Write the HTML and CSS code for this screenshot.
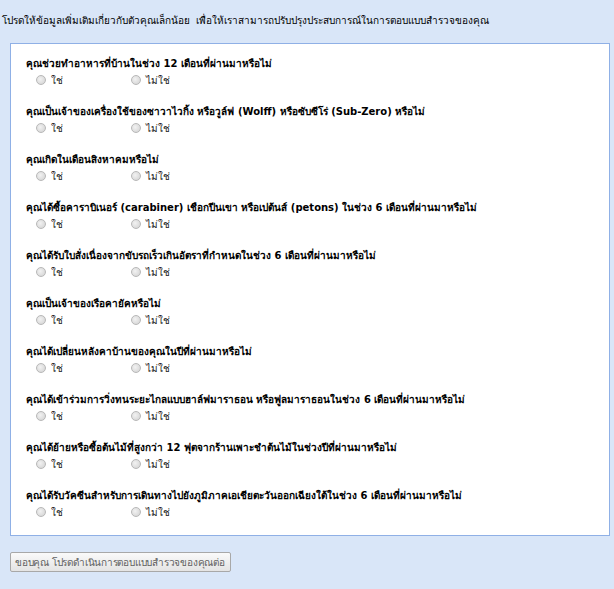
FILE: index.html
```html
<!DOCTYPE html>
<html lang="th">
<head>
<meta charset="utf-8">
<link rel="stylesheet" href="styles.css">
</head>
<body>
<div class="page">
  <p class="intro">โปรดให้ข้อมูลเพิ่มเติมเกี่ยวกับตัวคุณเล็กน้อย&nbsp; เพื่อให้เราสามารถปรับปรุงประสบการณ์ในการตอบแบบสำรวจของคุณ</p>
  <div class="box">
    <div class="q">
      <div class="qt">คุณช่วยทำอาหารที่บ้านในช่วง 12 เดือนที่ผ่านมาหรือไม่</div>
      <div class="opts"><label class="opt"><span class="radio"></span>ใช่</label><label class="opt"><span class="radio"></span>ไม่ใช่</label></div>
    </div>
    <div class="q">
      <div class="qt">คุณเป็นเจ้าของเครื่องใช้ของซาวาไวกิ้ง หรือวูล์ฟ (Wolff) หรือซับซีโร่ (Sub-Zero) หรือไม่</div>
      <div class="opts"><label class="opt"><span class="radio"></span>ใช่</label><label class="opt"><span class="radio"></span>ไม่ใช่</label></div>
    </div>
    <div class="q">
      <div class="qt">คุณเกิดในเดือนสิงหาคมหรือไม่</div>
      <div class="opts"><label class="opt"><span class="radio"></span>ใช่</label><label class="opt"><span class="radio"></span>ไม่ใช่</label></div>
    </div>
    <div class="q">
      <div class="qt">คุณได้ซื้อคาราบิเนอร์ (carabiner) เชือกปีนเขา หรือเปต้นส์ (petons) ในช่วง 6 เดือนที่ผ่านมาหรือไม่</div>
      <div class="opts"><label class="opt"><span class="radio"></span>ใช่</label><label class="opt"><span class="radio"></span>ไม่ใช่</label></div>
    </div>
    <div class="q">
      <div class="qt">คุณได้รับใบสั่งเนื่องจากขับรถเร็วเกินอัตราที่กำหนดในช่วง 6 เดือนที่ผ่านมาหรือไม่</div>
      <div class="opts"><label class="opt"><span class="radio"></span>ใช่</label><label class="opt"><span class="radio"></span>ไม่ใช่</label></div>
    </div>
    <div class="q">
      <div class="qt">คุณเป็นเจ้าของเรือคายัคหรือไม่</div>
      <div class="opts"><label class="opt"><span class="radio"></span>ใช่</label><label class="opt"><span class="radio"></span>ไม่ใช่</label></div>
    </div>
    <div class="q">
      <div class="qt">คุณได้เปลี่ยนหลังคาบ้านของคุณในปีที่ผ่านมาหรือไม่</div>
      <div class="opts"><label class="opt"><span class="radio"></span>ใช่</label><label class="opt"><span class="radio"></span>ไม่ใช่</label></div>
    </div>
    <div class="q">
      <div class="qt">คุณได้เข้าร่วมการวิ่งทนระยะไกลแบบฮาล์ฟมาราธอน หรือฟูลมาราธอนในช่วง 6 เดือนที่ผ่านมาหรือไม่</div>
      <div class="opts"><label class="opt"><span class="radio"></span>ใช่</label><label class="opt"><span class="radio"></span>ไม่ใช่</label></div>
    </div>
    <div class="q">
      <div class="qt">คุณได้ย้ายหรือซื้อต้นไม้ที่สูงกว่า 12 ฟุตจากร้านเพาะชำต้นไม้ในช่วงปีที่ผ่านมาหรือไม่</div>
      <div class="opts"><label class="opt"><span class="radio"></span>ใช่</label><label class="opt"><span class="radio"></span>ไม่ใช่</label></div>
    </div>
    <div class="q">
      <div class="qt">คุณได้รับวัคซีนสำหรับการเดินทางไปยังภูมิภาคเอเชียตะวันออกเฉียงใต้ในช่วง 6 เดือนที่ผ่านมาหรือไม่</div>
      <div class="opts"><label class="opt"><span class="radio"></span>ใช่</label><label class="opt"><span class="radio"></span>ไม่ใช่</label></div>
    </div>
  </div>
  <div class="actions"><button class="btn" type="button">ขอบคุณ โปรดดำเนินการตอบแบบสำรวจของคุณต่อ</button></div>
</div>
</body>
</html>
```
FILE: styles.css
```css
html, body {
  margin: 0;
  padding: 0;
  background: #d9e6f8;
}
body {
  font-family: "DejaVu Sans", "Noto Sans", sans-serif;
  font-size: 10px;
  color: #000;
}
.page {
  padding: 14px 4px 0 10px;
  width: 600px;
}
.intro {
  margin: 0 0 0 -8px;
  line-height: 14px;
  height: 29px;
  white-space: nowrap;
}
.box {
  background: #fff;
  border: 1px solid #8fb0e6;
  box-sizing: border-box;
  width: 600px;
  height: 493px;
  padding: 12px 0 0 15px;
}
.q {
  margin-bottom: 16px;
}
.qt {
  font-weight: bold;
  line-height: 16px;
  white-space: nowrap;
}
.opts {
  display: flex;
  height: 16px;
  align-items: center;
  padding-left: 10px;
}
.opt {
  display: flex;
  align-items: center;
  width: 95px;
  color: #222;
}
.radio {
  display: inline-block;
  width: 8px;
  height: 8px;
  border-radius: 50%;
  border: 1px solid #b8b8b8;
  background: radial-gradient(circle at 40% 40%, #f2f2f2, #d0d0d0);
  margin-right: 5px;
}
.actions {
  padding-top: 16px;
}
.btn {
  font-family: inherit;
  font-size: 10px;
  letter-spacing: -0.22px;
  color: #606060;
  height: 20px;
  padding: 0 5px 0 4px;
  border: 1px solid #a8a8a8;
  border-radius: 2px;
  background: linear-gradient(#fafafa, #e4e4e4);
  white-space: nowrap;
}
```
